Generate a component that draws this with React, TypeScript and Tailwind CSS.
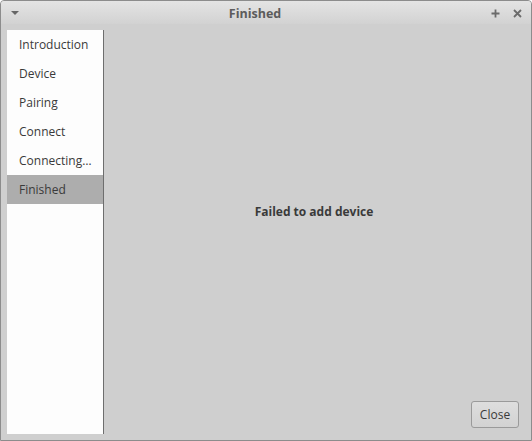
import React from "react";

const items = ["Introduction", "Device", "Pairing", "Connect", "Connecting…", "Finished"];

export default function App() {
  return (
    <div
      className="w-[532px] h-[441px] flex flex-col border border-[#8c8c8c] rounded-t-[4px] overflow-hidden bg-[#cfcfcf]"
      style={{ fontFamily: '"Open Sans", "Noto Sans", sans-serif' }}
    >
      <div className="h-[23px] shrink-0 flex items-center bg-gradient-to-b from-[#e4e4e4] to-[#d2d2d2] relative">
        <svg className="absolute left-[9px] top-[9px]" width="10" height="6" viewBox="0 0 10 6">
          <path d="M1 1 L9 1 L5 5 Z" fill="#666" />
        </svg>
        <div className="flex-1 text-center text-[12.5px] font-bold text-[#5c5c5c] leading-none pt-[3px] pr-[22px]">Finished</div>
        <svg className="absolute right-[31px] top-[8px]" width="9" height="9" viewBox="0 0 9 9">
          <path d="M4.5 0.5 V8.5 M0.5 4.5 H8.5" stroke="#6b6b6b" strokeWidth="1.8" />
        </svg>
        <svg className="absolute right-[9px] top-[8px]" width="9" height="9" viewBox="0 0 9 9">
          <path d="M1 1 L8 8 M8 1 L1 8" stroke="#6b6b6b" strokeWidth="1.8" />
        </svg>
      </div>
      <div className="flex-1 flex pt-[6px] pl-[6px] pb-[6px]">
        <div className="w-[97px] bg-[#fdfdfd] border-r border-[#6e6e6e] flex flex-col">
          {items.map((t) => (
            <div
              key={t}
              className={`h-[29px] flex items-center pl-[12px] text-[12px] text-[#3a3a3a] ${
                t === "Finished" ? "bg-[#adadad]" : ""
              }`}
            >
              {t}
            </div>
          ))}
        </div>
        <div className="flex-1 flex flex-col">
          <div className="flex-1 flex items-center justify-center pb-[8px] pr-[7px]">
            <span className="text-[12px] font-bold text-[#3a3a3a]">Failed to add device</span>
          </div>
          <div className="flex justify-end pr-[12px] pb-[6px]">
            <button className="w-[48px] h-[27px] rounded-[3px] border border-[#9a9a9a] bg-gradient-to-b from-[#dedede] to-[#d2d2d2] text-[12px] text-[#3a3a3a]">
              Close
            </button>
          </div>
        </div>
      </div>
    </div>
  );
}
